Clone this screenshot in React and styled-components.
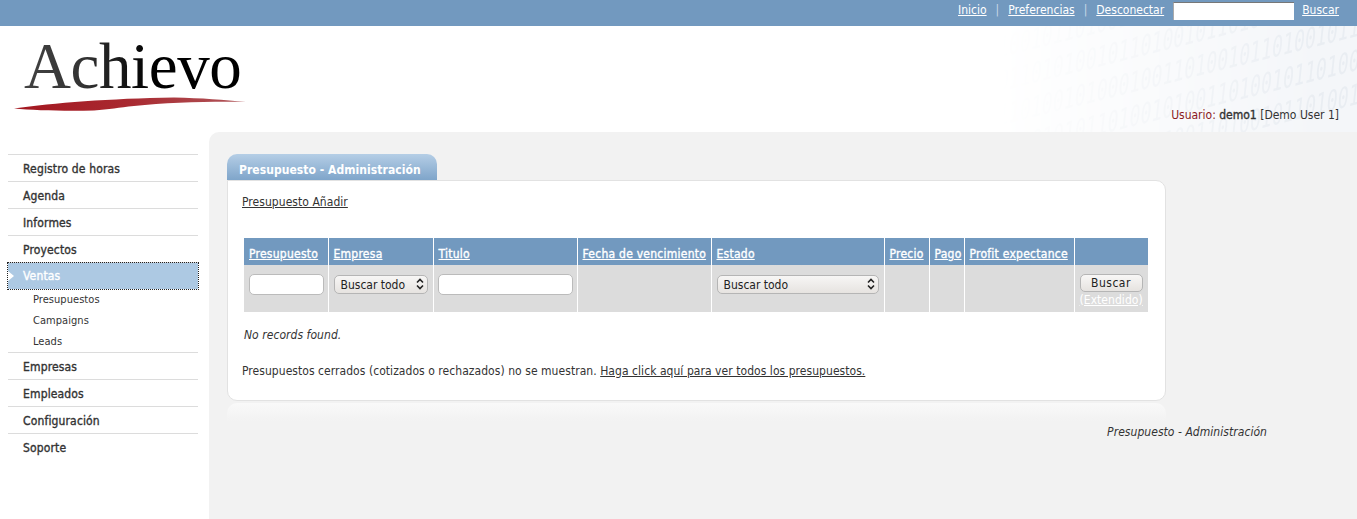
import React from 'react'
import styled, { createGlobalStyle } from 'styled-components'

const GlobalStyle = createGlobalStyle`
  html, body {
    margin: 0;
    padding: 0;
    background: #fff;
  }
  body {
    font-family: "DejaVu Sans Condensed", "DejaVu Sans", Verdana, sans-serif;
    font-stretch: condensed;
    font-size: 12px;
    letter-spacing: 0.05px;
    color: #333;
  }
`

const menu = [
  { label: 'Registro de horas' },
  { label: 'Agenda' },
  { label: 'Informes' },
  { label: 'Proyectos' },
  { label: 'Ventas', active: true, sub: ['Presupuestos', 'Campaigns', 'Leads'] },
  { label: 'Empresas' },
  { label: 'Empleados' },
  { label: 'Configuración' },
  { label: 'Soporte' },
]

const columns = [
  { label: 'Presupuesto', width: 84 },
  { label: 'Empresa', width: 105 },
  { label: 'Titulo', width: 144 },
  { label: 'Fecha de vencimiento', width: 134 },
  { label: 'Estado', width: 173 },
  { label: 'Precio', width: 45 },
  { label: 'Pago', width: 35 },
  { label: 'Profit expectance', width: 110 },
  { label: '', width: 74 },
]

// faint binary pattern behind the header, one row per line
const digitRows = [
  { y: 168, text: '10101101001011010011010010110100101' },
  { y: 134, text: '01001010110100101001101001011010011' },
  { y: 100, text: '11010010100010011010010110100101101' },
  { y: 66, text: '01101010010110100101101001100101101' },
  { y: 32, text: '10010110100110101001011010010110100' },
]

const Select = ({ width }) => (
  <SelectWrap $width={width}>
    <Dropdown><option>Buscar todo</option></Dropdown>
    <Chevrons viewBox="0 0 8 12" aria-hidden="true">
      <path d="M1 4.5 4 1.5 7 4.5M1 7.5 4 10.5 7 7.5" />
    </Chevrons>
  </SelectWrap>
)

const App = () => {
  return (
    <Page>
      <GlobalStyle />
      <TopBar>
        <TopLink href="#">Inicio</TopLink>
        <Pipe>|</Pipe>
        <TopLink href="#">Preferencias</TopLink>
        <Pipe>|</Pipe>
        <TopLink href="#">Desconectar</TopLink>
        <TopSearch type="text" />
        <TopLink href="#">Buscar</TopLink>
      </TopBar>

      <Header>
        <Texture viewBox="0 0 360 106" aria-hidden="true">
          <defs>
            <linearGradient id="fade" x1="0" x2="1" y1="0" y2="0">
              <stop offset="0" stopColor="#000" />
              <stop offset="0.9" stopColor="#fff" />
            </linearGradient>
            <mask id="fadeMask">
              <rect width="360" height="106" fill="url(#fade)" />
            </mask>
          </defs>
          <g mask="url(#fadeMask)">
            <rect width="360" height="106" fill="#f4f6f9" />
            <g fill="#e9edf2" fontFamily="DejaVu Sans Mono, monospace" fontSize="22">
              {digitRows.map((row) => (
                <text key={row.y} transform={`translate(0 ${row.y}) rotate(-14) skewX(-20) scale(0.85 1.25)`}>{row.text}</text>
              ))}
            </g>
          </g>
        </Texture>
        <Logo>
          <LogoText>Achievo</LogoText>
          <Swoosh viewBox="0 0 232 16" aria-hidden="true">
            <defs>
              <linearGradient id="swoosh" x1="0" x2="1" y1="0" y2="0">
                <stop offset="0" stopColor="#a3161f" />
                <stop offset="0.5" stopColor="#a92a31" />
                <stop offset="1" stopColor="#b0565a" />
              </linearGradient>
            </defs>
            <path d="M0 12.5C40 7 95 2.5 160 1.5c28 .5 50 2.5 72 4.5-38-.6-78 .6-112 4C105 11.5 95 13.5 80 14.5 50 15 20 14.5 0 12.5Z" fill="url(#swoosh)" />
          </Swoosh>
        </Logo>
        <UserInfo>
          <UserLabel>Usuario:</UserLabel> <UserName>demo1</UserName> [Demo User 1]
        </UserInfo>
      </Header>

      <Body>
        <Sidebar>
          {menu.map((item) => (
            <NavGroup key={item.label}>
              <NavItem $active={item.active}>
                {item.active && <Arrow />}
                {item.label}
              </NavItem>
              {item.sub && (
                <SubList>
                  {item.sub.map((s) => <SubItem key={s}>{s}</SubItem>)}
                </SubList>
              )}
            </NavGroup>
          ))}
        </Sidebar>

        <Content>
          <Tab>Presupuesto - Administración</Tab>
          <Card>
            <DarkLink href="#">Presupuesto Añadir</DarkLink>
            <Table>
              <colgroup>
                {columns.map((c, i) => <col key={i} style={{ width: c.width }} />)}
              </colgroup>
              <thead>
                <tr>
                  {columns.map((c, i) => (
                    <HeadCell key={i}>{c.label && <HeadLink href="#">{c.label}</HeadLink>}</HeadCell>
                  ))}
                </tr>
              </thead>
              <tbody>
                <tr>
                  <FilterCell><TextInput $width={75} /></FilterCell>
                  <FilterCell><Select width={94} /></FilterCell>
                  <FilterCell $tight><TextInput $width={135} /></FilterCell>
                  <FilterCell />
                  <FilterCell><Select width={162} /></FilterCell>
                  <FilterCell />
                  <FilterCell />
                  <FilterCell />
                  <FilterCell>
                    <SearchButton>Buscar</SearchButton>
                    <ExtendedLink href="#">(Extendido)</ExtendedLink>
                  </FilterCell>
                </tr>
              </tbody>
            </Table>
            <NoRecords>No records found.</NoRecords>
            <Notice>
              Presupuestos cerrados (cotizados o rechazados) no se muestran.{' '}
              <DarkLink href="#">Haga click aquí para ver todos los presupuestos.</DarkLink>
            </Notice>
          </Card>
          <CardFoot />
          <FootTitle>Presupuesto - Administración</FootTitle>
        </Content>
      </Body>
    </Page>
  )
}

export default App


const Page = styled.div`
  width: 1357px;
  height: 519px;
  overflow: hidden;
  line-height: 14px;
`

const TopBar = styled.div`
  height: 26px;
  box-sizing: border-box;
  background: #7299bf;
  display: flex;
  align-items: flex-start;
  justify-content: flex-end;
  padding: 2px 18px 0 0;
  color: #fff;
  letter-spacing: 0;
`

const TopLink = styled.a`
  color: #fff;
  line-height: 17px;
  text-decoration: underline;
`

const Pipe = styled.span`
  margin: 0 9px;
  line-height: 17px;
  color: #c9d8e6;
`

const TopSearch = styled.input`
  width: 121px;
  height: 18px;
  box-sizing: border-box;
  margin: 0 8px 0 9px;
  padding: 0;
  border: 0;
  border-top: 1px solid #777;
  border-left: 1px solid #aaa;
  background: #fff;
`

const Header = styled.div`
  position: relative;
  height: 106px;
`

const Texture = styled.svg`
  position: absolute;
  right: 0;
  top: 0;
  width: 360px;
  height: 106px;
`

const Logo = styled.div`
  position: absolute;
  left: 14px;
  top: 6px;
  width: 232px;
`

const LogoText = styled.div`
  font-family: "Liberation Serif", "Times New Roman", serif;
  font-size: 65px;
  line-height: 68px;
  padding-left: 10px;
  letter-spacing: -0.4px;
  white-space: nowrap;
  background: linear-gradient(90deg, #454545 0%, #333 30%, #000 60%);
  -webkit-background-clip: text;
  background-clip: text;
  color: transparent;
`

const Swoosh = styled.svg`
  display: block;
  width: 232px;
  height: 16px;
  margin-top: -4px;
`

const UserInfo = styled.div`
  position: absolute;
  right: 18px;
  bottom: 10px;
  color: #333;
  letter-spacing: 0;
`

const UserLabel = styled.span`
  color: #8b1a1f;
`

const UserName = styled.span`
  -webkit-text-stroke: 0.35px currentColor;
`

const Body = styled.div`
  display: flex;
  height: 387px;
`

const Sidebar = styled.div`
  width: 209px;
  flex: none;
  box-sizing: border-box;
  padding: 22px 11px 0 8px;
`

const NavGroup = styled.div`
  border-top: 1px solid #dcdcdc;
`

const NavItem = styled.div`
  position: relative;
  height: 26px;
  line-height: ${(p) => (p.$active ? '26px' : '28px')};
  padding-left: 15px;
  letter-spacing: 0.15px;
  -webkit-text-stroke: 0.35px currentColor;
  color: ${(p) => (p.$active ? '#fff' : '#333')};
  background: ${(p) => (p.$active ? '#adc9e3' : 'transparent')};
  outline: ${(p) => (p.$active ? '1px dotted #222' : '0')};
`

const Arrow = styled.span`
  position: absolute;
  left: 0;
  top: 8px;
  width: 0;
  height: 0;
  border-left: 6px solid #fff;
  border-top: 5px solid transparent;
  border-bottom: 5px solid transparent;
`

const SubList = styled.div`
  padding-left: 25px;
`

const SubItem = styled.div`
  height: 21px;
  line-height: 21px;
  font-size: 11px;
  color: #333;
`

const Content = styled.div`
  flex: 1;
  box-sizing: border-box;
  background: #f2f2f2;
  border-top-left-radius: 10px;
  padding: 22px 191px 0 18px;
`

const Tab = styled.div`
  width: 210px;
  height: 26px;
  box-sizing: border-box;
  padding-left: 12px;
  line-height: 32px;
  font-weight: 700;
  color: #fff;
  border-radius: 10px 10px 0 0;
  background: linear-gradient(#b5cee6, #7fa5ca);
  white-space: nowrap;
`

const Card = styled.div`
  height: 221px;
  box-sizing: border-box;
  padding: 14px 17px 0 14px;
  background: #fff;
  border: 1px solid #e2e2e2;
  border-radius: 0 10px 10px 10px;
`

const DarkLink = styled.a`
  color: #333;
  text-decoration: underline;
`

const Table = styled.table`
  table-layout: fixed;
  width: 904px;
  margin: 29px 0 0 2px;
  border-collapse: collapse;
`

const HeadCell = styled.th`
  height: 27px;
  box-sizing: border-box;
  padding: 9px 3px 0 5px;
  text-align: left;
  vertical-align: top;
  background: #7299bf;
  border-left: 1px solid #fff;
  border-bottom: 1px dashed #dcdcdc;
  white-space: nowrap;
  font-weight: 400;
  letter-spacing: 0.25px;
  -webkit-text-stroke: 0.35px currentColor;

  &:first-child {
    border-left: 0;
  }
`

const HeadLink = styled.a`
  color: #fff;
  text-decoration: underline;
`

const FilterCell = styled.td`
  height: 47px;
  box-sizing: border-box;
  padding: 0 3px 0 ${(p) => (p.$tight ? '4px' : '5px')};
  vertical-align: top;
  background: #dcdcdc;
  border-left: 1px solid #fff;

  &:first-child {
    border-left: 0;
  }
`

const TextInput = styled.input`
  display: block;
  width: ${(p) => p.$width}px;
  height: 21px;
  box-sizing: border-box;
  margin-top: 8px;
  padding: 0 4px;
  background: #fff;
  border: 1px solid #bbb;
  border-radius: 5px;
`

const SelectWrap = styled.div`
  position: relative;
  width: ${(p) => p.$width}px;
  margin-top: 9px;
`

const Dropdown = styled.select`
  display: block;
  width: 100%;
  height: 19px;
  box-sizing: border-box;
  padding: 1px 6px 0;
  appearance: none;
  font-family: inherit;
  font-stretch: inherit;
  font-size: 12px;
  color: #222;
  background: linear-gradient(#f7f6f5, #e6e3e0);
  border: 1px solid #b5b5b5;
  border-radius: 5px;
`

const Chevrons = styled.svg`
  position: absolute;
  right: 4px;
  top: 3px;
  width: 8px;
  height: 12px;
  fill: none;
  stroke: #222;
  stroke-width: 1.6;
`

const SearchButton = styled.button`
  display: block;
  width: 63px;
  height: 18px;
  box-sizing: border-box;
  margin: 8px 0 0;
  padding: 1px 0 0;
  font-family: inherit;
  font-stretch: inherit;
  font-size: 12px;
  letter-spacing: 0.5px;
  color: #222;
  background: linear-gradient(#f8f7f6, #e6e3e0);
  border: 1px solid #b5b5b5;
  border-radius: 5px;
`

const ExtendedLink = styled.a`
  display: block;
  margin-top: 2px;
  color: #fff;
  line-height: 13px;
  text-decoration: underline;
  white-space: nowrap;
`

const NoRecords = styled.div`
  margin: 16px 0 0 2px;
  font-style: italic;
`

const Notice = styled.div`
  margin-top: 22px;
`

const CardFoot = styled.div`
  height: 18px;
  margin-top: 2px;
  border-radius: 10px 10px 0 0;
  background: linear-gradient(#f9f9f9, #f2f2f2);
`

const FootTitle = styled.div`
  margin: 4px -101px 0 0;
  text-align: right;
  font-style: italic;
`
